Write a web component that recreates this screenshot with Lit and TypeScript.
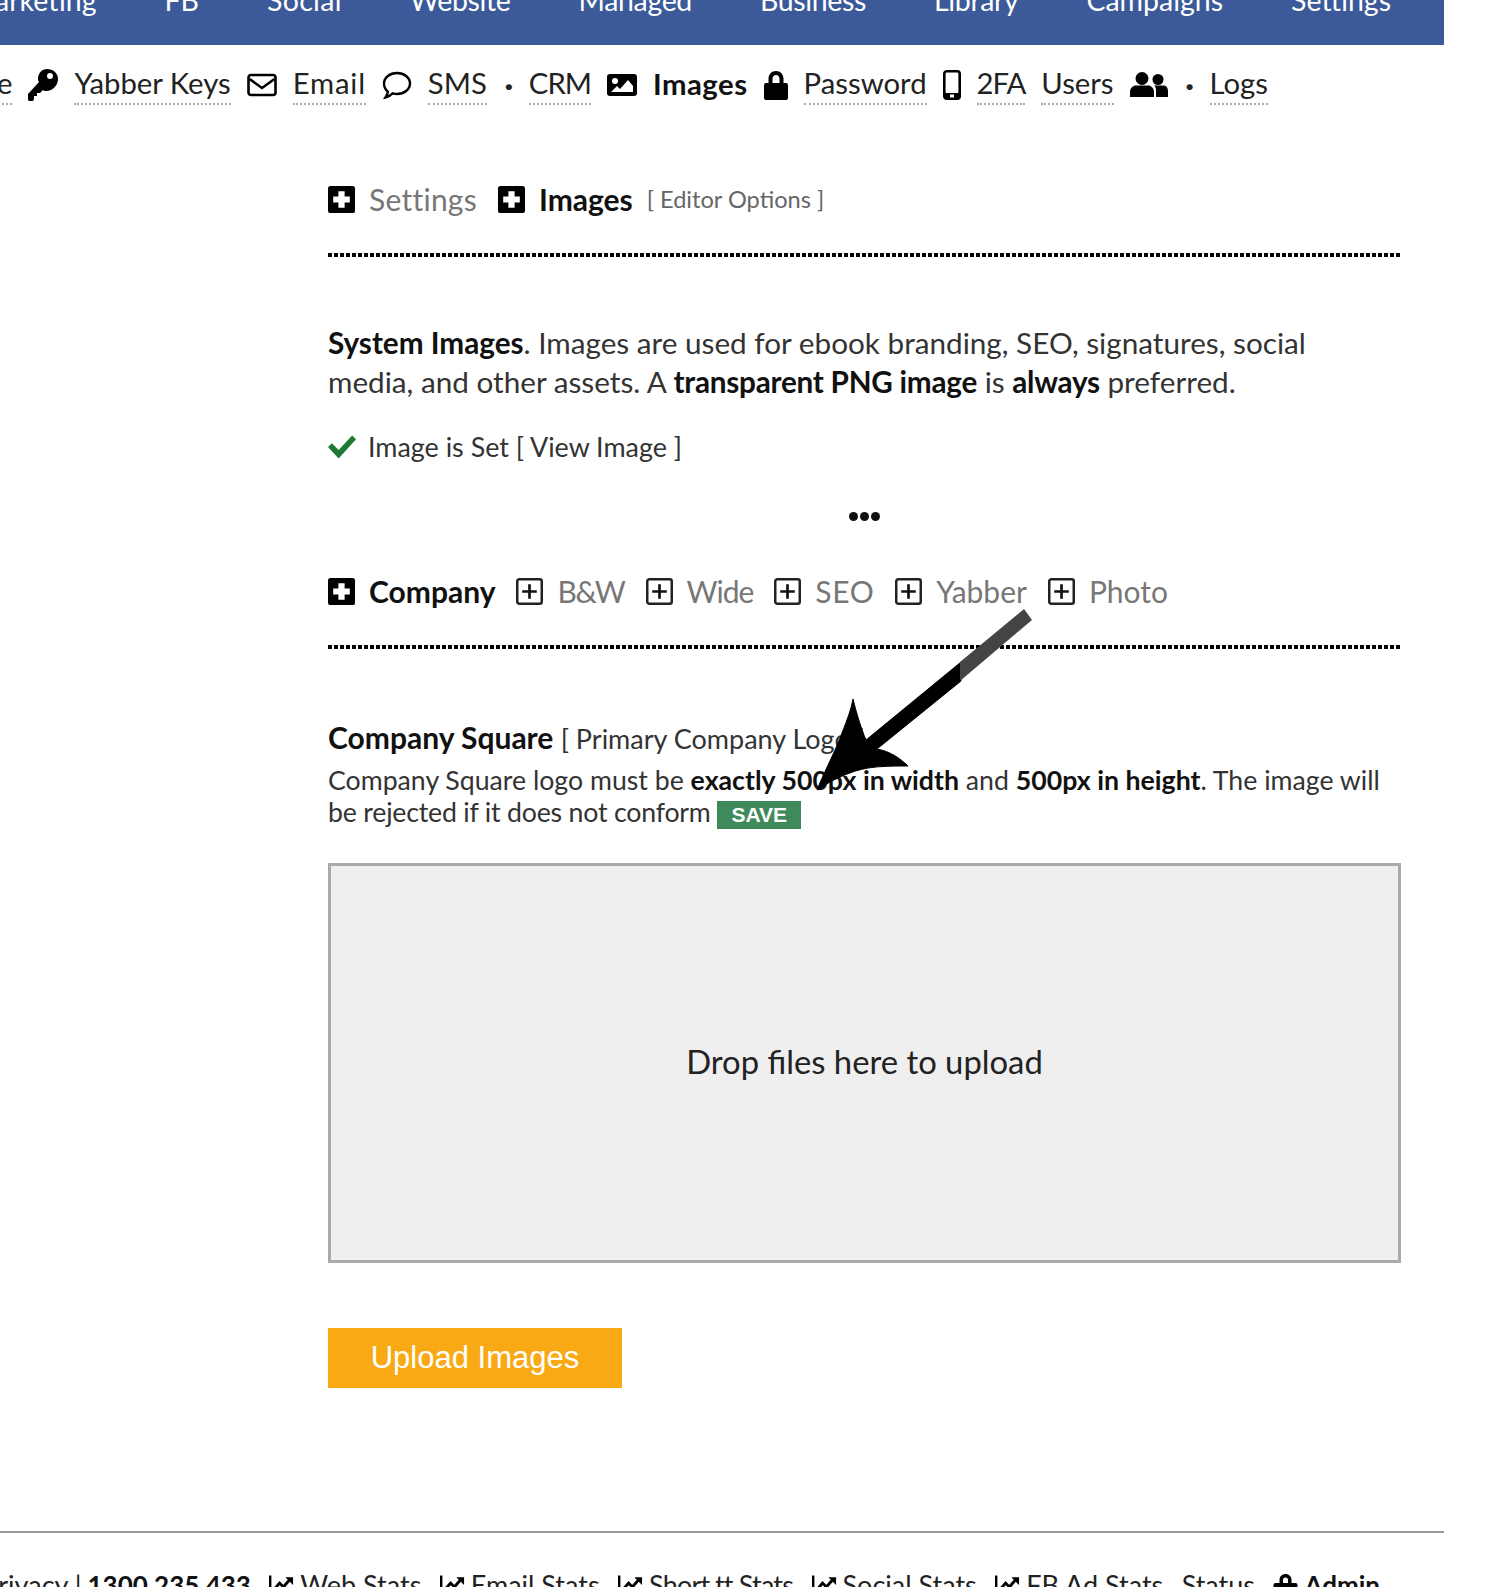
import { LitElement, html, css, svg } from "lit";
import { customElement } from "lit/decorators.js";

const ic = (vb: string, cls: string, body: unknown) =>
  html`<svg class=${cls} viewBox=${vb} aria-hidden="true">${body}</svg>`;

const key = () => ic("0 0 30 32", "i key", svg`<path fill="#000" fill-rule="evenodd" d="M19 0c6 0 11 4 11 10 0 6-5 12-12 12-1 0-2 0-3-1l-3 3H9v3H6v3l-1 2H1l-1-1v-6l11-12c-1-1-1-2-1-3 0-6 4-10 9-10zm3 4a3 3 0 1 0 0 6 3 3 0 0 0 0-6z"/>`);
const mail = () => ic("0 0 30 24", "i mail", svg`<rect x="1.500" y="2" width="27" height="20" rx="2.500" fill="none" stroke="#000" stroke-width="2.600"/><path d="M2.500 6l12.500 9 12.500-9" fill="none" stroke="#000" stroke-width="2.600"/>`);
const bubble = () => ic("0 0 30 30", "i bubble", svg`<path d="M15 3c7 0 13 4.500 13 10.500S22 24 15 24c-1.500 0-3-.2-4.300-.6C8.500 25.500 6 27 3.500 27.500c1.200-1.800 2.200-3.800 2.400-5.800C3.500 19.700 2 16.800 2 13.500 2 7.500 8 3 15 3z" fill="none" stroke="#000" stroke-width="2.400"/>`);
const picture = () => ic("0 0 30 24", "i pic", svg`<path fill="#000" fill-rule="evenodd" d="M3 1h24a3 3 0 0 1 3 3v16a3 3 0 0 1-3 3H3a3 3 0 0 1-3-3V4a3 3 0 0 1 3-3zm5 4a3 3 0 1 0 0 6 3 3 0 0 0 0-6zm-4 14h22v-6l-5-6-8 9-3-3z"/>`);
const lock = () => ic("0 0 24 30", "i lock", svg`<path fill="#000" d="M12 1c4.500 0 7.500 3.500 7.500 8v4H22a2 2 0 0 1 2 2v13a2 2 0 0 1-2 2H2a2 2 0 0 1-2-2V15a2 2 0 0 1 2-2h2.500V9C4.500 4.500 7.500 1 12 1zm0 4c-2.200 0-3.500 1.800-3.500 4v4h7V9c0-2.200-1.300-4-3.500-4z"/>`);
const phone = () => ic("0 0 18 30", "i phone", svg`<rect x="1.300" y="1.300" width="15.400" height="27.400" rx="2.500" fill="none" stroke="#000" stroke-width="2.600"/><rect x="1" y="23" width="16" height="6" fill="#000"/><rect x="7" y="24.500" width="4" height="3" fill="#fff"/>`);
const users = () => ic("0 0 38 26", "i users", svg`<circle cx="12" cy="6.500" r="6.500" fill="#000"/><path d="M0 25v-5c0-4 3-6.500 6-6.500h12c3 0 6 2.500 6 6.500v5z" fill="#000"/><circle cx="28" cy="7.500" r="5.500" fill="#000"/><path d="M26 25v-7c0-2-.6-3.500-2-4.500h9c3 0 5 2 5 5.500v6z" fill="#000"/>`);
const plusSolid = () => ic("0 0 26 26", "box", svg`<rect width="26" height="26" rx="2.500" fill="#000"/><path d="M10 5h6v5h5v6h-5v5h-6v-5H5v-6h5z" fill="#fff"/>`);
const plusLine = () => ic("0 0 26 26", "box", svg`<rect x="1.200" y="1.200" width="23.600" height="23.600" rx="2" fill="none" stroke="#222" stroke-width="2.400"/><path d="M13 6v14M6 13h14" stroke="#111" stroke-width="2.600"/>`);
const check = () => ic("0 0 30 24", "check", svg`<path d="M0 12l4-4 7 7L25 0l4 4-18 20z" fill="#1d7a33"/>`);
const chart = () => ic("0 0 26 20", "chart", svg`<path d="M1 0v19h24" fill="none" stroke="#000" stroke-width="3"/><path d="M5 15l6-7 4 4 6-7" fill="none" stroke="#000" stroke-width="3"/><path d="M17 2h8v8z" fill="#000"/>`);
const lockSm = () => ic("0 0 24 24", "chart lk", svg`<path fill="#000" d="M12 1c3.500 0 6 2.500 6 6v3h4a2 2 0 0 1 2 2v10a2 2 0 0 1-2 2H2a2 2 0 0 1-2-2V12a2 2 0 0 1 2-2h4V7c0-3.500 2.500-6 6-6zm0 3.500C10.300 4.500 9.500 5.700 9.500 7v3h5V7c0-1.300-.8-2.500-2.500-2.500z"/>`);

@customElement("app-root")
export class AppRoot extends LitElement {
  static styles = css`
    :host { display: block; }
    .page { position: relative; height: 1587px; overflow: hidden; background: #fff; color: #222;
      font-family: Lato, "Open Sans", sans-serif; font-size: 29px; }
    .nav { width: 1444px; height: 45px; box-sizing: border-box; background: #3c5a99; display: flex;
      justify-content: flex-end; align-items: flex-end; gap: 68px; padding: 0 53px 30px 0; overflow: hidden;
      color: #fff; font-size: 28.5px; line-height: 30px; white-space: nowrap; }
    .nav .n { letter-spacing: -0.35px; }
    .nav .w { letter-spacing: 0.3px; }
    .sub { display: flex; justify-content: flex-end; align-items: center; height: 40px; margin-top: 20px;
      padding-right: 232px; white-space: nowrap; overflow: hidden; gap: 16px; font-size: 29.3px; line-height: 36px; }
    .sub span.t { border-bottom: 2px dotted #aaa; height: 40px; box-sizing: border-box; display: block; }
    .sub span.tight { letter-spacing: -1px; }
    .sub span.wide { letter-spacing: 0.8px; }
    .sub b { font-weight: 700; color: #111; letter-spacing: 0.5px; margin-bottom: 2px; }
    .sub .pt { font-weight: 900; width: 6px; text-align: center; margin: 0 2px; }
    .i { display: block; flex: none; }
    .key { width: 30px; height: 32px; } .mail { width: 30px; height: 24px; } .bubble { width: 30px; height: 30px; }
    .pic { width: 30px; height: 24px; } .lock { width: 24px; height: 30px; } .phone { width: 18px; height: 30px; }
    .users { width: 38px; height: 26px; }
    .main { margin-left: 328px; width: 1073px; }
    .tabs { display: flex; align-items: center; height: 36px; white-space: nowrap; font-size: 30px; color: #777; }
    .tabs.first { margin-top: 76px; }
    .tabs.second { margin-top: 47px; }
    .box { width: 27px; height: 27px; flex: none; margin-right: 14px; }
    .tab { margin-right: 21px; }
    .tab.on { color: #111; font-weight: 700; }
    .tab.n1 { letter-spacing: -1.3px; }
    .tab.n2 { letter-spacing: -1px; }
    .tab.w1 { letter-spacing: 0.6px; }
    .tab.w2 { letter-spacing: 0.25px; }
    .note { font-size: 23.6px; margin-left: -7px; color: #666; }
    .rule { height: 4px; margin-top: 36px;
      background: repeating-linear-gradient(90deg, #000 0 4px, transparent 4px 6px); }
    .para { margin: 66px 0 0; line-height: 39px; font-size: 29.7px; color: #333; }
    .para strong, .desc strong { color: #111; font-weight: 700; }
    .para strong.n { letter-spacing: -0.25px; }
    .status { display: flex; align-items: center; gap: 11px; margin-top: 28px; font-size: 26.9px; line-height: 36px; color: #333; }
    .check { width: 29px; height: 24px; flex: none; }
    .dots { text-align: center; height: 20px; margin-top: 41px; display: flex; justify-content: center; gap: 2px; align-items: center; }
    .dots i { width: 9px; height: 9px; border-radius: 50%; background: #111; display: block; }
    .head { margin-top: 70px; font-size: 30px; line-height: 36px; color: #111; font-weight: 700; }
    .head span { font-weight: 400; font-size: 27px; color: #333; }
    .desc { margin: 7px 0 0; font-size: 26.7px; line-height: 32px; color: #333; }
    .desc .n { letter-spacing: -0.2px; }
    .save { display: inline-block; vertical-align: 0; background: #3f8a5b; color: #fff; padding: 0 14px;
      font: 700 21px/28px "Liberation Sans", sans-serif; }
    .drop { margin-top: 34px; height: 400px; box-sizing: border-box; border: 3px solid #aaa; background: #efefef; padding-bottom: 3px;
      display: flex; align-items: center; justify-content: center; font-size: 32.800px; color: #222; }
    .up { display: block; margin-top: 65px; width: 294px; height: 60px; border: 0; padding: 0; background: #f9a913; color: #fff;
      font: 31px "Liberation Sans", sans-serif; }
    .hr { width: 1444px; height: 2px; background: #999; margin-top: 143px; }
    .foot { display: flex; justify-content: flex-end; align-items: center; gap: 6px; margin-top: 34px; padding-right: 120px;
      white-space: nowrap; font-size: 27px; line-height: 36px; color: #222; }
    .foot b { font-weight: 700; color: #111; font-size: 26px; }
    .foot .narrow { letter-spacing: -0.8px; }
    .chart { width: 25px; height: 20px; flex: none; }
    .lk { height: 24px; }
    .arrow { position: absolute; left: 800px; top: 600px; width: 250px; height: 200px; }
  `;

  render() {
    return html`<div class="page">
      <div class="nav"><span>Marketing</span><span>FB</span><span class="w">Social</span><span class="n">Website</span><span class="n">Managed</span><span class="n">Business</span><span class="n">Library</span><span>Campaigns</span><span>Settings</span></div>
      <div class="sub">
        <span class="t">Profile</span>${key()}<span class="t">Yabber Keys</span>${mail()}<span class="t wide">Email</span>${bubble()}<span class="t">SMS</span>
        <span class="pt">·</span><span class="t tight">CRM</span>${picture()}<b>Images</b>${lock()}<span class="t">Password</span>${phone()}<span class="t tight">2FA</span><span class="t">Users</span>${users()}
        <span class="pt">·</span><span class="t">Logs</span>
      </div>
      <div class="main">
        <div class="tabs first">${plusSolid()}<span class="tab w2">Settings</span>${plusSolid()}<span class="tab on">Images</span><span class="note">[ Editor Options ]</span></div>
        <div class="rule"></div>
        <p class="para"><strong>System Images</strong>. Images are used for ebook branding, SEO, signatures, social<br />media, and other assets. A <strong class="n">transparent PNG image</strong> is <strong class="n">always</strong> preferred.</p>
        <div class="status">${check()}<span>Image is Set [ View Image ]</span></div>
        <div class="dots"><i></i><i></i><i></i></div>
        <div class="tabs second">${plusSolid()}<span class="tab on">Company</span>${plusLine()}<span class="tab n1">B&amp;W</span>${plusLine()}<span class="tab n2">Wide</span>${plusLine()}<span class="tab w1">SEO</span>${plusLine()}<span class="tab">Yabber</span>${plusLine()}<span class="tab">Photo</span></div>
        <div class="rule"></div>
        <div class="head">Company Square <span>[ Primary Company Logo ]</span></div>
        <p class="desc">Company Square logo must be <strong>exactly 500px in width</strong> and <strong>500px in height</strong>. The image will <span class="n">be rejected if it does not conform</span> <span class="save">SAVE</span></p>
        <div class="drop">Drop files here to upload</div>
        <button class="up">Upload Images</button>
      </div>
      <div class="hr"></div>
      <div class="foot"><span>Privacy |</span><b>1300 235 433</b><span>.</span>${chart()}<span>Web Stats</span><span>.</span>${chart()}<span>Email Stats</span><span>.</span>${chart()}<span class="narrow">Short.tt Stats</span><span>.</span>${chart()}<span>Social Stats</span><span>.</span>${chart()}<span>FB Ad Stats</span><span>.</span><span>Status</span><span>.</span>${lockSm()}<b>Admin</b></div>
      <svg class="arrow" viewBox="800 600 250 200" aria-hidden="true">
        <path d="M817 790 C824 772 837 748 842 733 C847 720 851 710 853 699 C857 715 861 728 866 740 L961 662 L961 681 L877 749 C889 751 900 758 908 766 C895 766 880 766 868 768 C850 771 832 780 817 790 Z" fill="#000" stroke="#000" stroke-width="1"/>
        <path d="M960 662 L1024 609 L1032 620 L960 681 Z" fill="#444"/>
      </svg>
    </div>`;
  }
}
